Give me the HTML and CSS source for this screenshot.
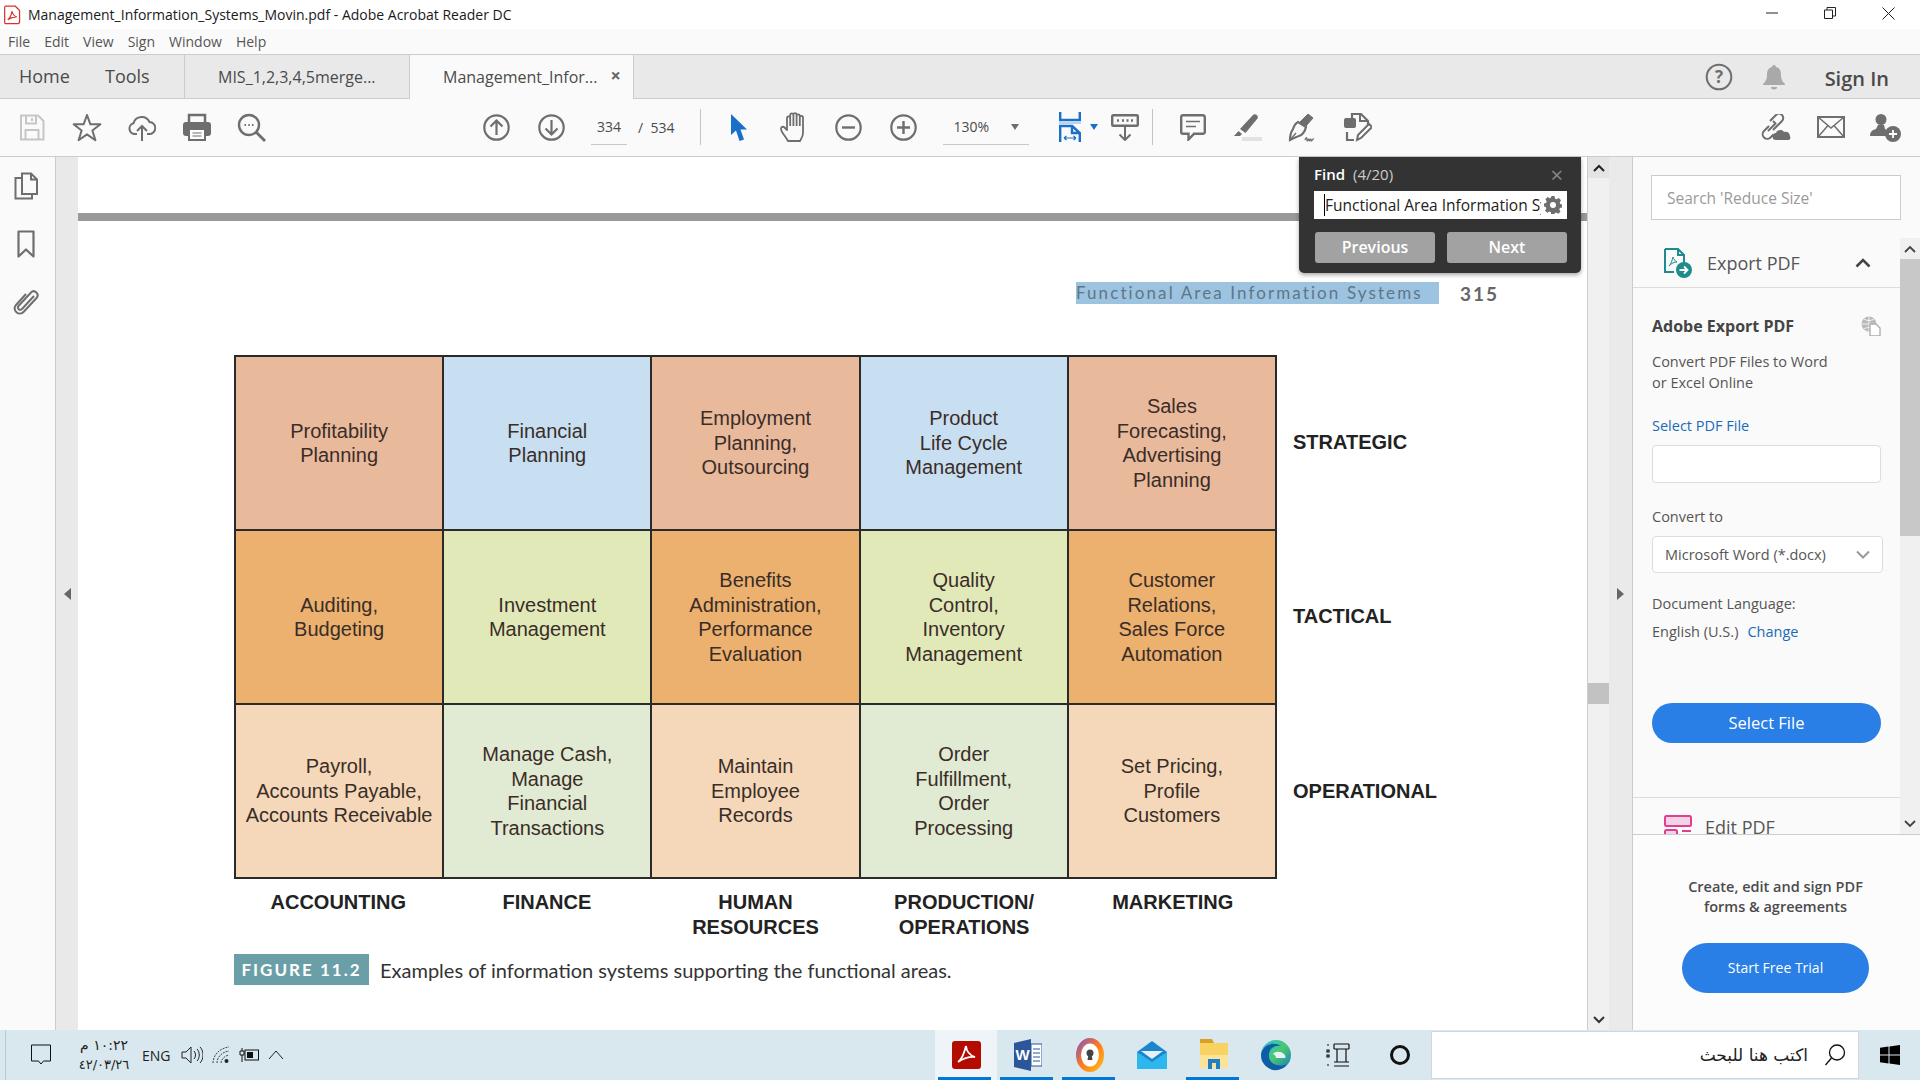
FILE: index.html
```html
<!DOCTYPE html>
<html lang="en">
<head>
    <meta charset="UTF-8">
    <title>Management_Information_Systems_Movin.pdf - Adobe Acrobat Reader DC</title>
    <link rel="stylesheet" href="styles.css">
</head>
<body>
    <div class="titlebar">
        <svg class="app-icon" viewBox="0 0 18 20"><path d="M2 .7h10l4.5 4.5v12a2 2 0 0 1-2 2H2a1.300 1.300 0 0 1-1.300-1.300V2A1.300 1.300 0 0 1 2 .7z" fill="#fff" stroke="#d8322a" stroke-width="1.300"/><path d="M4 15c2-1 3.500-4 4.500-9 .5 3 2 5 5 6-3-.2-5.500.5-9.500 3z" fill="none" stroke="#d8322a" stroke-width="1.200"/></svg>
        <span class="title-text">Management_Information_Systems_Movin.pdf - Adobe Acrobat Reader DC</span>
        <div class="win-controls">
            <div class="win-btn"><svg width="12" height="12" viewBox="0 0 12 12"><path d="M0 6h12" stroke="#222" fill="none"/></svg></div>
            <div class="win-btn"><svg width="12" height="12" viewBox="0 0 12 12"><path d="M.5 3h8v8.500h-8zM3 3V.5h8.500V9H8.500" stroke="#222" fill="none"/></svg></div>
            <div class="win-btn win-close"><svg width="13" height="13" viewBox="0 0 13 13"><path d="M.5.5l12 12M12.500.5l-12 12" stroke="#222" fill="none"/></svg></div>
        </div>
    </div>

    <div class="menubar">
        <span>File</span><span>Edit</span><span>View</span><span>Sign</span><span>Window</span><span>Help</span>
    </div>

    <div class="tabbar">
        <span class="nav-home">Home</span>
        <span class="nav-tools">Tools</span>
        <div class="tab">MIS_1,2,3,4,5merge...</div>
        <div class="tab tab-active">Management_Infor...<span class="tab-x">&times;</span></div>
        <div class="tabbar-right">
            <svg class="help-icon" width="28" height="28" viewBox="0 0 28 28"><circle cx="14" cy="14" r="12.300" fill="none" stroke="#6e6e6e" stroke-width="2"/><text x="14" y="19.500" text-anchor="middle" class="help-mark">?</text></svg>
            <svg class="bell-icon" width="22" height="26" viewBox="0 0 22 26"><path d="M11 1c1.500 0 2 1 2 2 4 1 5 4 5 8 0 5 2 7 4 9v1H0v-1c2-2 4-4 4-9 0-4 1-7 5-8 0-1 .5-2 2-2z" fill="#a9a9a9"/><path d="M8 23h6a3 2.500 0 0 1-6 0z" fill="#a9a9a9"/></svg>
            <span class="sign-in">Sign In</span>
        </div>
    </div>

    <div class="toolbar">
        <div class="tool"><svg width="26" height="27" viewBox="0 0 26 27"><path d="M2 1.500h17l5.500 5.500v18.500H2zM7 1.500v8h10v-8M13 4v3M6.500 25.500V16h13v9.500" fill="none" stroke="#c6c6c6" stroke-width="2"/></svg></div>
        <div class="tool"><svg width="30" height="29" viewBox="0 0 30 29"><path d="M15 2l3.400 9.300h10l-8 6.200 3 9.700-8.400-5.800-8.400 5.800 3-9.700-8-6.200h10z" fill="none" stroke="#6e6e6e" stroke-width="2" stroke-linejoin="round"/></svg></div>
        <div class="tool"><svg width="28" height="29" viewBox="0 0 28 29"><path d="M9 21H7A5.500 5.500 0 0 1 5.500 10.200 8.500 8.500 0 0 1 21.500 9 6 6 0 0 1 21 21h-2M14 28V13M9 18l5-5 5 5" fill="none" stroke="#6e6e6e" stroke-width="2"/></svg></div>
        <div class="tool"><svg width="28" height="28" viewBox="0 0 28 28"><path d="M6 10V2h16v8" fill="none" stroke="#6e6e6e" stroke-width="2.500"/><rect y="9" width="28" height="14" rx="3" fill="#6e6e6e"/><rect x="6" y="16" width="16" height="11" fill="#fff" stroke="#6e6e6e" stroke-width="2"/><path d="M9.500 20h9M9.500 23h9" stroke="#6e6e6e" stroke-width="1.200"/></svg></div>
        <div class="tool"><svg width="29" height="29" viewBox="0 0 29 29"><circle cx="12" cy="12" r="10" fill="none" stroke="#6e6e6e" stroke-width="2.400"/><path d="M19 19l9 9" stroke="#6e6e6e" stroke-width="2.800"/><path d="M7.500 12h1.500M11.300 12h1.500M15 12h1.500" stroke="#6e6e6e" stroke-width="2"/></svg></div>

        <div class="tool tool-nav"><svg width="27" height="27" viewBox="0 0 27 27"><circle cx="13.500" cy="13.500" r="12.200" fill="none" stroke="#6e6e6e" stroke-width="2.200"/><path d="M13.500 21V6.500M7.500 12.500l6-6 6 6" fill="none" stroke="#6e6e6e" stroke-width="2.200"/></svg></div>
        <div class="tool"><svg width="27" height="27" viewBox="0 0 27 27"><circle cx="13.500" cy="13.500" r="12.200" fill="none" stroke="#6e6e6e" stroke-width="2.200"/><path d="M13.500 6v14.500M7.500 14.500l6 6 6-6" fill="none" stroke="#6e6e6e" stroke-width="2.200"/></svg></div>
        <div class="page-box">334</div>
        <span class="page-total">/&nbsp;&nbsp;534</span>
        <div class="tool-sep sep-first"></div>

        <div class="tool tool-cursor"><svg width="17" height="27" viewBox="0 0 17 27"><path d="M1 0v21l5-4.500L9.500 27l4.500-1.500L10.500 15.500H17z" fill="#1a70c8"/></svg></div>
        <div class="tool"><svg width="28" height="30" viewBox="0 0 28 30"><path d="M8 29c-2-4-7-9-7-12 0-2 2-3 3.500-1.500L7 18V6a1.600 1.600 0 0 1 3.200 0V3a1.600 1.600 0 0 1 3.200 0v-.3a1.600 1.600 0 0 1 3.200 0V4a1.600 1.600 0 0 1 3.200 0v1.500a1.600 1.600 0 0 1 3.200 0V21c0 4-2 6-3 8zM10.200 6v8M13.400 3v11M16.600 3v11M19.800 4v10" fill="none" stroke="#6e6e6e" stroke-width="1.800" stroke-linejoin="round"/></svg></div>
        <div class="tool"><svg width="27" height="27" viewBox="0 0 27 27"><circle cx="13.500" cy="13.500" r="12.200" fill="none" stroke="#6e6e6e" stroke-width="2.200"/><path d="M7 13.500h13" stroke="#6e6e6e" stroke-width="2.400"/></svg></div>
        <div class="tool"><svg width="27" height="27" viewBox="0 0 27 27"><circle cx="13.500" cy="13.500" r="12.200" fill="none" stroke="#6e6e6e" stroke-width="2.200"/><path d="M7 13.500h13M13.500 7v13" stroke="#6e6e6e" stroke-width="2.400"/></svg></div>
        <div class="zoom-box">130%<span class="caret"></span></div>
        <div class="tool tool-fit"><svg width="22" height="30" viewBox="0 0 22 30"><path d="M1.200 0v8h19.600V0" fill="none" stroke="#1a70c8" stroke-width="2.400"/><path d="M0 11h22" stroke="#bcd3ec" stroke-width="2"/><path d="M1.200 30V14h12l7.600 7v9M13 14v7h7.800" fill="none" stroke="#1a70c8" stroke-width="2.400"/><path d="M5 26h12M5 26l2.500-2M5 26l2.500 2M17 26l-2.500-2M17 26l-2.500 2" fill="none" stroke="#1a70c8" stroke-width="1.200"/></svg><span class="caret caret-blue"></span></div>
        <div class="tool"><svg width="28" height="27" viewBox="0 0 28 27"><rect x="1.200" y="1.200" width="25.600" height="10.600" rx="1" fill="none" stroke="#6e6e6e" stroke-width="2.400"/><path d="M6 6.500h2M11 6.500h2M15.500 6.500h2M20 6.500h2" stroke="#6e6e6e" stroke-width="2.400"/><path d="M14 12v14M8.500 20.500l5.500 5.500 5.500-5.500" fill="none" stroke="#6e6e6e" stroke-width="2"/></svg></div>
        <div class="tool-sep"></div>
        <div class="tool tool-comment"><svg width="26" height="27" viewBox="0 0 26 27"><path d="M3 1.200h20a1.800 1.800 0 0 1 1.800 1.800v15a1.800 1.800 0 0 1-1.800 1.800H14L8.500 25.500v-5.700H3A1.800 1.800 0 0 1 1.200 18V3A1.800 1.800 0 0 1 3 1.200z" fill="none" stroke="#6e6e6e" stroke-width="2.400"/><path d="M6 7.500h14M6 12.500h10" stroke="#6e6e6e" stroke-width="1.500"/></svg></div>
        <div class="tool"><svg width="29" height="28" viewBox="0 0 29 28"><path d="M7 16L20 2c2-2 6 1 4.500 3.500L12.500 20l-5.500-4z" fill="#6e6e6e"/><path d="M5.500 18l3.500 3-2 2H1z" fill="#6e6e6e"/><rect x="9" y="24" width="20" height="4" fill="#e2e2e2"/></svg></div>
        <div class="tool"><svg width="29" height="29" viewBox="0 0 29 29"><path d="M10 9l8 5c-1 4-4 8-7 9-3 1-7 3-9 4 0-4 1-8 3-11 1-3 3-6 5-7z" fill="none" stroke="#6e6e6e" stroke-width="2.200"/><path d="M11 10L20 1l5 4-7 8" fill="#6e6e6e" stroke="#6e6e6e"/><path d="M2 27l6-7" stroke="#6e6e6e" stroke-width="1.300"/><path d="M17 27c1-3 2-3 2 0s2-3 2 0 2-3 2 0 2-2 3-1" fill="none" stroke="#6e6e6e" stroke-width="1.300"/></svg></div>
        <div class="tool"><svg width="29" height="30" viewBox="0 0 29 30"><path d="M9 6V2h9l7 7v4" fill="none" stroke="#6e6e6e" stroke-width="2.200"/><path d="M17 2v7h8" fill="none" stroke="#6e6e6e" stroke-width="2"/><rect x="1" y="6" width="12" height="10" rx="2" fill="#6e6e6e"/><path d="M4 20v8h7" fill="none" stroke="#6e6e6e" stroke-width="2.200"/><path d="M14 28l1-5 11-11 3 3-11 11z" fill="#fff" stroke="#6e6e6e" stroke-width="2"/></svg></div>

        <div class="toolbar-right">
            <div class="tool"><svg width="31" height="27" viewBox="0 0 31 27"><path d="M9 12l-5 5a4.500 4.500 0 0 0 6.500 6.500l3-3M13 16l9-9a4 4 0 0 0-6-6l-6 6M8 17l8-8M13 7l3 3" fill="none" stroke="#6e6e6e" stroke-width="2"/><path d="M16 26a3.500 3.500 0 0 1 0-7c.5-3 6-4.500 8-1 3-1 6 .5 6 4.500 1 1.500 0 3.500-1.500 3.500z" fill="#6e6e6e"/></svg></div>
            <div class="tool"><svg width="28" height="22" viewBox="0 0 28 22"><rect x="1" y="1" width="26" height="20" fill="none" stroke="#6e6e6e" stroke-width="2"/><path d="M1 1l13 11L27 1M1 21l10-11.500M27 21L17 9.500" fill="none" stroke="#6e6e6e" stroke-width="1.500"/></svg></div>
            <div class="tool"><svg width="31" height="29" viewBox="0 0 31 29"><circle cx="11" cy="6.500" r="5.500" fill="#6e6e6e"/><path d="M8 12h6l1 4 3 2a9 9 0 0 0-2 5H0c0-4 2-6 6-7z" fill="#6e6e6e"/><circle cx="23" cy="21" r="8" fill="#6e6e6e"/><path d="M19 21h8M23 17v8" stroke="#fff" stroke-width="1.800"/></svg></div>
        </div>
    </div>

    <div class="main">
        <div class="rail">
            <svg width="24" height="28" viewBox="0 0 24 28"><path d="M8 3V1.500h9l6 6V22h-5" fill="none" stroke="#6e6e6e" stroke-width="2"/><path d="M8 1.500V22h15M17 1.500v6h6" fill="none" stroke="#6e6e6e" stroke-width="2"/><path d="M8 6H1.500v20.500H18V22" fill="none" stroke="#6e6e6e" stroke-width="2"/></svg>
            <svg width="18" height="28" viewBox="0 0 18 28"><path d="M1.500 1.500h15v25L9 19.500l-7.500 7z" fill="none" stroke="#6e6e6e" stroke-width="2.200" stroke-linejoin="round"/></svg>
            <svg width="26" height="27" viewBox="0 0 26 27"><path d="M21 8L9 21c-2 2.500-5.500-1-3.500-3L18 4.500c3.500-3.500 9 1.500 5.500 5.500L11 23.500C6 29-1.500 22 3 17L13 6" fill="none" stroke="#6e6e6e" stroke-width="2"/></svg>
        </div>
        <div class="gutter"><span class="tri-left"></span></div>

        <div class="page">
            <div class="page-rule"></div>
            <div class="running-head">
                <span class="hit">Functional Area Information Systems</span>
                <span class="folio">315</span>
            </div>

            <div class="figure-row">
                <div class="matrix">
                    <div class="cell c-orange">Profitability<br>Planning</div>
                    <div class="cell c-blue">Financial<br>Planning</div>
                    <div class="cell c-orange">Employment<br>Planning,<br>Outsourcing</div>
                    <div class="cell c-blue">Product<br>Life Cycle<br>Management</div>
                    <div class="cell c-orange">Sales<br>Forecasting,<br>Advertising<br>Planning</div>

                    <div class="cell c-amber">Auditing,<br>Budgeting</div>
                    <div class="cell c-lime">Investment<br>Management</div>
                    <div class="cell c-amber">Benefits<br>Administration,<br>Performance<br>Evaluation</div>
                    <div class="cell c-lime">Quality<br>Control,<br>Inventory<br>Management</div>
                    <div class="cell c-amber">Customer<br>Relations,<br>Sales Force<br>Automation</div>

                    <div class="cell c-peach">Payroll,<br>Accounts Payable,<br>Accounts Receivable</div>
                    <div class="cell c-sage">Manage Cash,<br>Manage<br>Financial<br>Transactions</div>
                    <div class="cell c-peach">Maintain<br>Employee<br>Records</div>
                    <div class="cell c-sage">Order<br>Fulfillment,<br>Order<br>Processing</div>
                    <div class="cell c-peach">Set Pricing,<br>Profile<br>Customers</div>
                </div>
                <div class="row-labels">
                    <div>STRATEGIC</div>
                    <div>TACTICAL</div>
                    <div>OPERATIONAL</div>
                </div>
            </div>
            <div class="col-labels">
                <div>ACCOUNTING</div>
                <div>FINANCE</div>
                <div>HUMAN<br>RESOURCES</div>
                <div>PRODUCTION/<br>OPERATIONS</div>
                <div>MARKETING</div>
            </div>
            <div class="caption">
                <span class="caption-tag">FIGURE 11.2</span>
                <span class="caption-text">Examples of information systems supporting the functional areas.</span>
            </div>

            <div class="find-box">
                <div class="find-head">
                    <b>Find</b><span class="find-count">(4/20)</span>
                    <span class="find-x">&times;</span>
                </div>
                <div class="find-input">
                    <span class="find-value">Functional Area Information Systems</span>
                    <svg width="18" height="18" viewBox="0 0 18 18"><path d="M7.500 0h3l.5 2.500 1.500.7L14.800 2 17 4.200l-1.300 2.200.6 1.500 2 .6v3l-2.400.6-.6 1.500 1.200 2.100-2.200 2.100-2.200-1.200-1.400.6-.7 2.300h-3L7 16.200l-1.500-.6-2.200 1.200L1 14.700l1.300-2.200-.6-1.500L0 10.500v-3l2.100-.6.6-1.500L1.400 3.200 3.600 1l2.100 1.200L7 1.600z" fill="#6e6e6e"/><circle cx="9" cy="9" r="3" fill="#fff"/></svg>
                </div>
                <div class="find-btns">
                    <div class="find-btn">Previous</div>
                    <div class="find-btn">Next</div>
                </div>
            </div>
        </div>

        <div class="vscroll">
            <div class="vs-arrow vs-active"><svg width="12" height="8" viewBox="0 0 12 8"><path d="M1 7l5-5 5 5" fill="none" stroke="#222" stroke-width="2"/></svg></div>
            <div class="vs-thumb"></div>
            <div class="vs-arrow vs-bottom"><svg width="12" height="8" viewBox="0 0 12 8"><path d="M1 1l5 5 5-5" fill="none" stroke="#333" stroke-width="2"/></svg></div>
        </div>
        <div class="gutter gutter-right"><span class="tri-right"></span></div>

        <div class="panel">
            <div class="panel-search"><input type="text" placeholder="Search 'Reduce Size'"></div>
            <div class="panel-scroll">
                <div class="panel-content">
                    <div class="section-head">
                        <svg width="30" height="30" viewBox="0 0 30 30"><path d="M1 1h13l6 6v8M14 1v6h6M1 1v23h9" fill="none" stroke="#1e8c8c" stroke-width="2"/><path d="M5 18c2-2 3-5 4-9 .5 2 2 4 4 5-3 0-5 1-8 4z" fill="none" stroke="#1e8c8c"/><circle cx="20" cy="22" r="8" fill="#1e8c8c"/><path d="M15.500 22h8M20 18.500l3.500 3.500-3.500 3.500" fill="none" stroke="#fff" stroke-width="1.800"/></svg>
                        <span>Export PDF</span>
                        <svg class="head-chev" width="16" height="10" viewBox="0 0 16 10"><path d="M1.500 8.500L8 2l6.500 6.500" fill="none" stroke="#444" stroke-width="2.600"/></svg>
                    </div>
                    <div class="section-body">
                        <div class="export-title">Adobe Export PDF
                            <svg width="20" height="20" viewBox="0 0 20 20"><circle cx="8" cy="8" r="7.500" fill="#b9b9b9"/><path d="M.5 8h15M8 .5v15M3 3c3 2 7 2 10 0M3 13c3-2 7-2 10 0" stroke="#fff" fill="none" stroke-width=".8"/><path d="M9 8h6l4 4v8H9z" fill="#fff" stroke="#aaa" stroke-width="1.300"/></svg>
                        </div>
                        <p class="export-desc">Convert PDF Files to Word<br>or Excel Online</p>
                        <a class="link file-label">Select PDF File</a>
                        <div class="file-field"></div>
                        <div class="convert-label">Convert to</div>
                        <div class="convert-select">Microsoft Word (*.docx)
                            <svg width="14" height="9" viewBox="0 0 14 9"><path d="M1 1.500l6 6 6-6" fill="none" stroke="#999" stroke-width="2"/></svg>
                        </div>
                        <div class="lang-label">Document Language:</div>
                        <div class="lang-value">English (U.S.)<a class="link">Change</a></div>
                        <div class="select-file">Select File</div>
                    </div>
                    <div class="section-head section-next">
                        <svg width="28" height="28" viewBox="0 0 28 28"><rect x="1" y="1" width="26" height="10" rx="1.500" fill="#f5d3e6" stroke="#e0418f" stroke-width="2"/><rect x="1" y="15" width="12" height="10" rx="1.500" fill="#f5d3e6" stroke="#e0418f" stroke-width="2"/><path d="M18 16h9M18 21h9" stroke="#e0418f" stroke-width="2"/></svg>
                        <span>Edit PDF</span>
                    </div>
                </div>
                <div class="panel-vscroll">
                    <div class="ps-arrow"><svg width="12" height="8" viewBox="0 0 12 8"><path d="M1 7l5-5 5 5" fill="none" stroke="#444" stroke-width="1.800"/></svg></div>
                    <div class="ps-thumb"></div>
                    <div class="ps-arrow ps-bottom"><svg width="12" height="8" viewBox="0 0 12 8"><path d="M1 1l5 5 5-5" fill="none" stroke="#444" stroke-width="1.800"/></svg></div>
                </div>
            </div>
            <div class="promo">
                <div class="promo-text">Create, edit and sign PDF<br>forms &amp; agreements</div>
                <div class="trial-btn">Start Free Trial</div>
            </div>
        </div>
    </div>

    <div class="taskbar">
        <div class="tray">
            <svg class="tray-note" width="20" height="22" viewBox="0 0 20 22"><path d="M.5 1h19v16h-7L10 20l-2.500-3h-7z" fill="none" stroke="#111"/></svg>
            <div class="clock">
                <div class="clock-time" dir="rtl">١٠:٢٢ م</div>
                <div class="clock-date">٤٢/٠٣/٢٦</div>
            </div>
            <span class="tray-lang">ENG</span>
            <svg class="tray-icon" width="22" height="18" viewBox="0 0 22 18"><path d="M1 6h4l5-5v16l-5-5H1zM13 5c2 2 2 6 0 8M16 3c3 3 3 9 0 12M19 1c4 4 4 12 0 16" fill="none" stroke="#222"/></svg>
            <svg class="tray-icon" width="18" height="18" viewBox="0 0 18 18"><path d="M1 17C1 9 8 2 17 1M5 17c0-6 5-11 12-12M9 17c0-3 3-7 8-8" fill="none" stroke="#444" stroke-dasharray="2 1"/><circle cx="14.500" cy="15" r="2" fill="#222"/></svg>
            <svg class="tray-icon" width="20" height="14" viewBox="0 0 20 14"><rect x="6" y="2" width="13.500" height="10" fill="none" stroke="#111"/><rect x="8" y="4" width="6" height="6" fill="#111"/><path d="M3 0v3M1 3h4v4H1zM3 7v7" stroke="#111" fill="none"/></svg>
            <svg class="tray-icon" width="16" height="10" viewBox="0 0 16 10"><path d="M1 9l7-8 7 8" fill="none" stroke="#222"/></svg>
        </div>
        <div class="task-apps">
            <div class="task-app task-active running">
                <svg width="29" height="28" viewBox="0 0 29 28"><rect width="29" height="28" rx="3" fill="#b30b00"/><path d="M6 21c3-2 6-8 8-16 .5 5 3 9 9 11-6-.5-11 1-17 5z" fill="none" stroke="#fff" stroke-width="1.800"/></svg>
            </div>
            <div class="task-app running">
                <svg width="28" height="32" viewBox="0 0 28 32"><path d="M0 4l17-4v32L0 28z" fill="#2b579a"/><rect x="17" y="5" width="11" height="22" fill="#fff" stroke="#2b579a"/><path d="M19 10h7M19 14h7M19 18h7M19 22h7" stroke="#2b579a"/><text x="8.500" y="21" text-anchor="middle" class="word-mark">W</text></svg>
            </div>
            <div class="task-app running">
                <svg width="28" height="34" viewBox="0 0 28 34"><defs><linearGradient id="ringFill" x1="0" y1="0" x2="1" y2="1"><stop offset="0" stop-color="#7a4fd0"/><stop offset=".5" stop-color="#ff7a1a"/><stop offset="1" stop-color="#ffc31a"/></linearGradient></defs><ellipse cx="14" cy="17" rx="14" ry="17" fill="url(#ringFill)"/><ellipse cx="14" cy="17" rx="9" ry="11.500" fill="#fff"/><circle cx="14" cy="15" r="3.500" fill="#444"/><path d="M12.500 16h3l1 6h-5z" fill="#444"/></svg>
            </div>
            <div class="task-app">
                <svg width="30" height="28" viewBox="0 0 30 28"><path d="M0 11L15 0l15 11v17H0z" fill="#1a86d0"/><path d="M0 11l15 10 15-10v17H0z" fill="#2cb8ee"/><path d="M4 10h22l-11 8z" fill="#e6f0f6"/></svg>
            </div>
            <div class="task-app running">
                <svg width="28" height="32" viewBox="0 0 28 32"><path d="M0 0h12l2 4H0z" fill="#d9a021"/><path d="M0 4h28v24H0z" fill="#f8d364"/><path d="M0 16h28v13H0z" fill="#fbe49a"/><path d="M8 30V20h12v10h-4v-6h-4v6z" fill="#1e7fc4"/></svg>
            </div>
            <div class="task-app">
                <svg width="30" height="32" viewBox="0 0 30 32"><defs><linearGradient id="edgeFill" x1="0" y1="0" x2="1" y2="1"><stop offset="0" stop-color="#2fc2e0"/><stop offset=".5" stop-color="#47c96f"/><stop offset="1" stop-color="#1a73c8"/></linearGradient></defs><circle cx="15" cy="16" r="15" fill="url(#edgeFill)"/><path d="M0 16C1 6 12 2 20 7c-7-1-13 3-12 11 1 7 9 11 18 7-5 7-14 8-20 3-4-3-6-7-6-12z" fill="#0f5ca8"/><path d="M12 15c2-3 8-3 11 0 2 2 2 4 0 4h-8c0-2-1-3-3-4z" fill="#e8f2f6"/></svg>
            </div>
            <div class="task-app">
                <svg width="24" height="24" viewBox="0 0 24 24"><path d="M1 2h2M1 7h2v2H1zM1 12h2v2H1zM1 22h2M8 1h15M8 6h15M8 1v5M23 1v5M11 6v13M20 6v13M8 19h15M8 23h15" fill="none" stroke="#111" stroke-width="1.200"/></svg>
            </div>
            <div class="task-app">
                <svg width="22" height="22" viewBox="0 0 22 22"><circle cx="11" cy="11" r="8.500" fill="none" stroke="#111" stroke-width="3"/></svg>
            </div>
        </div>
        <div class="task-search">
            <span class="task-search-text" dir="rtl">اكتب هنا للبحث</span>
            <svg width="22" height="22" viewBox="0 0 22 22"><circle cx="13" cy="8.500" r="7.500" fill="none" stroke="#111" stroke-width="1.300"/><path d="M7.500 14L1.500 21" stroke="#111" stroke-width="1.300"/></svg>
        </div>
        <div class="task-start">
            <svg width="20" height="20" viewBox="0 0 20 20"><path d="M0 2.800l8.500-1.200v8H0zM9.500 1.400L20 0v9.600H9.500zM0 10.500h8.500v8L0 17.300zM9.500 10.500H20V20L9.500 18.600z" fill="#000"/></svg>
        </div>
    </div>
</body>
</html>
```

FILE: styles.css
```css
* { box-sizing: border-box; }
html, body { margin: 0; height: 100%; }
body {
    width: 1920px;
    height: 1080px;
    overflow: hidden;
    display: flex;
    flex-direction: column;
    font-family: "Open Sans", sans-serif;
    color: #4b4b4b;
    background: #fff;
}
svg { display: block; flex: none; }

/* window chrome */
.titlebar { height: 29px; display: flex; align-items: center; padding-left: 4px; background: #fff; flex: none; }
.app-icon { width: 17px; height: 20px; }
.title-text { margin-left: 7px; font-size: 14px; color: #1a1a1a; }
.win-controls { margin-left: auto; display: flex; padding-right: 3px; align-self: stretch; }
.win-btn { width: 58px; display: flex; align-items: center; justify-content: center; padding-bottom: 3px; }

.menubar { height: 25px; display: flex; align-items: center; padding-left: 8px; gap: 14px; background: #fafafa; font-size: 14px; color: #555; flex: none; padding-bottom: 1px; }

.tabbar { height: 45px; display: flex; align-items: stretch; background: #e9e9e9; border-top: 1px solid #ccc; border-bottom: 1px solid #ccc; flex: none; }
.nav-home { margin-left: 19px; width: 86px; font-size: 18px; line-height: 42px; }
.nav-tools { width: 79px; font-size: 18px; line-height: 42px; }
.tab { width: 225px; padding-left: 33px; font-size: 16px; line-height: 44px; border-left: 1px solid #ccc; }
.tab-active { background: #fafafa; border-right: 1px solid #ccc; height: 44px; position: relative; display: flex; }
.tab-x { margin-left: 13px; font-size: 18px; font-weight: 700; color: #666; line-height: 40px; }
.tabbar-right { margin-left: auto; display: flex; align-items: center; padding-right: 31px; }
.help-mark { font: 700 17px "Open Sans", sans-serif; fill: #6e6e6e; }
.bell-icon { margin-left: 30px; }
.sign-in { margin-left: 40px; font-size: 20px; font-weight: 600; color: #4b4b4b; padding-top: 3px; }

/* toolbar */
.toolbar { height: 58px; display: flex; align-items: center; padding: 0 7px 1px 4px; background: #fafafa; border-bottom: 1px solid #ccc; flex: none; font-size: 14px; }
.tool { width: 55px; height: 40px; display: flex; align-items: center; justify-content: center; flex: none; }
.tool-nav { margin-left: 190px; }
.page-box { width: 36px; height: 36px; margin-left: 12px; line-height: 35px; text-align: center; border-bottom: 1px solid #c8c8c8; }
.page-total { margin-left: 11px; }
.tool-sep { width: 1px; height: 36px; background: #c4c4c4; flex: none; }
.sep-first { margin-left: 26px; }
.tool-cursor { margin-left: 10px; }
.zoom-box { width: 86px; height: 36px; margin-left: 12px; padding-left: 10px; line-height: 35px; border-bottom: 1px solid #c8c8c8; position: relative; display: flex; justify-content: space-between; padding-right: 10px; align-items: center; }
.caret { width: 0; height: 0; border-left: 4.500px solid transparent; border-right: 4.500px solid transparent; border-top: 6px solid #6e6e6e; }
.caret-blue { border-top-color: #1a70c8; margin-left: 9px; margin-right: -18px; }
.tool-fit { margin-left: 13px; }
.tool-comment { margin-left: 12px; }
.tool-sep + .tool-comment { margin-left: 12px; }
.toolbar-right { margin-left: auto; display: flex; }

/* main area */
.main { flex: 1; display: flex; min-height: 0; }
.rail { width: 56px; background: #fafafa; border-right: 1px solid #ccc; display: flex; flex-direction: column; align-items: center; padding: 15px 4px 0 0; gap: 30px; flex: none; }
.gutter { width: 22px; background: #e9e9e9; display: flex; align-items: center; justify-content: center; flex: none; }
.gutter-right { width: 23px; border-right: 1px solid #ccc; width: 24px; background: #eaeaea; }
.tri-left { border-top: 6px solid transparent; border-bottom: 6px solid transparent; border-right: 7px solid #666; }
.tri-right { border-top: 6px solid transparent; border-bottom: 6px solid transparent; border-left: 7px solid #666; }

/* the page itself */
.page { width: 1510px; background: #fff; position: relative; flex: none; padding-top: 56px; border-right: 1px solid #ccc; }
.page-rule { height: 8px; background: #999; }
.running-head { margin-top: 61px; height: 22px; display: flex; justify-content: flex-end; align-items: center; padding-right: 88px; }
.hit { width: 363px; height: 22px; background: #9cc3e0; color: #5f7688; font: 17px/22px "Lato", sans-serif; letter-spacing: 2.100px; white-space: nowrap; overflow: hidden; }
.folio { margin-left: 21px; font: 700 19px "Lato", sans-serif; letter-spacing: 2px; color: #666; }

.figure-row { margin: 51px 0 0 156px; display: flex; }
.matrix { width: 1043px; height: 524px; display: grid; grid-template-columns: repeat(5, 1fr); grid-template-rows: repeat(3, 1fr); gap: 2px; padding: 2px; background: #2a2a2a; flex: none; }
.cell { display: flex; align-items: center; justify-content: center; text-align: center; font: 20px/24.500px "Liberation Sans", Arial, sans-serif; color: #3a2d28; }
.c-orange { background: #e9b99c; }
.c-blue { background: #c8dff2; }
.c-amber { background: #ecb06f; }
.c-lime { background: #e1e9b9; }
.c-peach { background: #f4d8b9; }
.c-sage { background: #e1ead2; }
.row-labels { display: grid; grid-template-rows: repeat(3, 1fr); margin-left: 16px; font: 700 20px "Liberation Sans", Arial, sans-serif; color: #222; align-items: center; }
.col-labels { margin: 11px 0 0 156px; width: 1043px; height: 50px; display: grid; grid-template-columns: repeat(5, 1fr); text-align: center; font: 700 20px/25px "Liberation Sans", Arial, sans-serif; color: #222; }
.caption { margin: 14px 0 0 156px; display: flex; align-items: center; }
.caption-tag { width: 135px; height: 31px; background: #6a9fa8; color: #fff; font: 700 17px/31px "Lato", sans-serif; letter-spacing: 2px; text-align: center; }
.caption-text { margin-left: 11px; font: 20px "Lato", sans-serif; color: #333; }

/* find popup */
.find-box { position: absolute; top: 0; right: 6px; width: 282px; height: 116px; background: #333; border-radius: 0 0 5px 5px; box-shadow: 0 2px 4px rgba(0,0,0,.35); padding: 0 14px 0 15px; color: #ccc; }
.find-head { height: 34px; display: flex; align-items: center; font-size: 15px; }
.find-head b { color: #fff; font-weight: 600; }
.find-count { margin-left: 8px; }
.find-x { margin-left: auto; font-size: 22px; color: #888; margin-right: 4px; }
.find-input { height: 28px; background: #fff; display: flex; align-items: center; padding: 0 5px; color: #222; font-size: 15.500px; border-left: 5px solid #fff; }
.find-value { flex: 1; white-space: nowrap; overflow: hidden; border-left: 1px solid #000; margin-right: 3px; }
.find-btns { margin-top: 13px; display: flex; justify-content: space-between; padding-left: 1px; }
.find-btn { width: 120px; height: 31px; background: #a2a2a2; border-radius: 3px; color: #fff; font-size: 16px; font-weight: 600; line-height: 30px; text-align: center; }

/* page scrollbar */
.vscroll { width: 21px; background: #f0f0f0; display: flex; flex-direction: column; flex: none; }
.vs-arrow { height: 21px; display: flex; align-items: center; justify-content: center; }
.vs-active { background: #e4e4e4; }
.vs-thumb { height: 21px; margin-top: 505px; background: #c2c2c2; }
.vs-bottom { margin-top: auto; }

/* right panel */
.panel { flex: 1; display: flex; flex-direction: column; background: #fafafa; min-width: 0; }
.panel-search { height: 81px; padding: 18px 19px 0 18px; background: #fafafa; flex: none; }
.panel-search input { width: 100%; height: 45px; border: 1px solid #ccc; background: #fff; padding: 0 15px; font: 15.500px "Open Sans", sans-serif; outline: none; }
.panel-search input::placeholder { color: #9a9a9a; opacity: 1; }
.panel-scroll { flex: 1; display: flex; min-height: 0; overflow: hidden; border-bottom: 1px solid #ccc; }
.panel-content { flex: 1; min-width: 0; overflow: hidden; }
.section-head { height: 50px; display: flex; align-items: center; padding: 0 23px 0 31px; font-size: 18px; color: #555; border-bottom: 1px solid #ddd; }
.section-head span { margin-left: 13px; }
.head-chev { margin-left: auto; margin-right: 6px; }
.section-next { align-items: flex-start; padding-top: 17px; border-bottom: none; height: 60px; }
.section-next span { margin-top: 0; }
.section-body { height: 510px; padding: 26px 0 0 19px; font-size: 14.500px; color: #555; border-bottom: 1px solid #ddd; }
.export-title { height: 24px; width: 229px; display: flex; justify-content: space-between; align-items: center; font-size: 16px; font-weight: 700; color: #444; line-height: 24px; }
.export-desc { margin: 13px 0 0; line-height: 21px; }
.link { color: #1a6ab8; }
.file-label { display: block; margin-top: 23px; line-height: 20px; }
.file-field { width: 229px; height: 38px; margin-top: 9px; background: #fff; border: 1px solid #ddd; border-radius: 4px; }
.convert-label { margin-top: 24px; line-height: 20px; }
.convert-select { width: 231px; height: 37px; margin-top: 9px; padding: 0 12px 0 12px; background: #fff; border: 1px solid #ddd; border-radius: 4px; display: flex; align-items: center; justify-content: space-between; }
.lang-label { margin-top: 21px; line-height: 20px; }
.lang-value { margin-top: 8px; line-height: 20px; }
.lang-value .link { margin-left: 9px; }
.select-file { width: 229px; height: 40px; margin-top: 61px; background: #2a7fe6; border-radius: 20px; color: #fff; text-align: center; font-size: 16.500px; line-height: 39px; }
.panel-vscroll { width: 20px; background: #f0f0f0; display: flex; flex-direction: column; flex: none; }
.ps-arrow { height: 21px; display: flex; align-items: center; justify-content: center; }
.ps-thumb { height: 277px; background: #c8c8c8; }
.ps-bottom { margin-top: auto; }
.promo { height: 195px; padding-top: 42px; flex: none; display: flex; flex-direction: column; align-items: center; background: #fcfcfc; padding-right: 2px; }
.promo-text { text-align: center; font-size: 14.500px; font-weight: 600; line-height: 20px; color: #4b4b4b; }
.trial-btn { width: 187px; height: 50px; margin-top: 26px; background: #2a7fe6; border-radius: 25px; color: #fff; text-align: center; font-size: 14px; line-height: 49px; }

/* windows taskbar */
.taskbar { height: 50px; display: flex; align-items: stretch; background: #d9e7ee; flex: none; }
.tray { width: 935px; display: flex; align-items: center; border-left: 1px solid #b9c9d2; margin-left: 5px; padding-left: 25px; flex: none; width: 930px; }
.clock { margin-left: 18px; width: 70px; font: 14px "DejaVu Sans", sans-serif; color: #222; line-height: 20px; text-align: center; }
.clock-date { font-size: 13px; }
.tray-lang { margin-left: 3px; font-size: 14px; color: #222; width: 30px; }
.tray-icon { margin-left: 9px; }
.task-apps { display: flex; width: 496px; flex: none; }
.task-app { width: 62px; display: flex; align-items: center; justify-content: center; position: relative; }
.task-active { background: #eef4f7; }
.running::after { content: ""; position: absolute; left: 3px; right: 6px; bottom: 0; height: 3px; background: #0078d7; }
.task-search { flex: 1; background: #fff; margin: 1px 0; display: flex; align-items: center; justify-content: flex-end; padding-right: 12px; border: 1px solid #cfd8dc; width: 428px; flex: none; }
.task-search-text { font: 17px "DejaVu Sans", sans-serif; color: #222; margin-right: 16px; }
.task-start { flex: 1; display: flex; align-items: center; justify-content: center; }
.word-mark { font: 700 15px "Liberation Sans", sans-serif; fill: #fff; }
```
